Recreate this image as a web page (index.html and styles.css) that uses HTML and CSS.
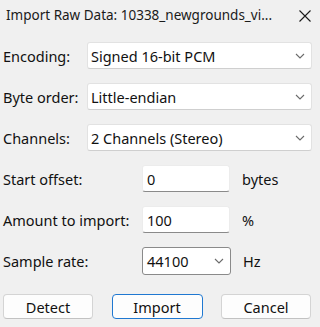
FILE: index.html
```html
<!DOCTYPE html>
<html lang="en">
<head>
    <meta charset="UTF-8">
    <title>Import Raw Data</title>
    <link rel="stylesheet" href="styles.css">
</head>
<body>
    <div class="dialog">
        <div class="titlebar">
            <span class="title">Import Raw Data: 10338_newgrounds_vi...</span>
            <svg class="close" width="12" height="12" viewBox="0 0 12 12"><path d="M0.5 0.5 L11.5 11.5 M11.5 0.5 L0.5 11.5" stroke="#1a1a1a" stroke-width="1.1" fill="none"/></svg>
        </div>

        <div class="form">
            <div class="row">
                <label class="lbl wide">Encoding:</label>
                <div class="combo full"><span>Signed 16-bit PCM</span><svg class="chev" width="10" height="6" viewBox="0 0 10 6"><path d="M1 1 L5 5 L9 1" stroke="#6b6b6b" stroke-width="1.1" fill="none"/></svg></div>
            </div>
            <div class="row">
                <label class="lbl wide">Byte order:</label>
                <div class="combo full"><span>Little-endian</span><svg class="chev" width="10" height="6" viewBox="0 0 10 6"><path d="M1 1 L5 5 L9 1" stroke="#6b6b6b" stroke-width="1.1" fill="none"/></svg></div>
            </div>
            <div class="row">
                <label class="lbl wide">Channels:</label>
                <div class="combo full"><span>2 Channels (Stereo)</span><svg class="chev" width="10" height="6" viewBox="0 0 10 6"><path d="M1 1 L5 5 L9 1" stroke="#6b6b6b" stroke-width="1.1" fill="none"/></svg></div>
            </div>
            <div class="row">
                <label class="lbl narrow">Start offset:</label>
                <div class="field">0</div>
                <span class="unit">bytes</span>
            </div>
            <div class="row">
                <label class="lbl narrow">Amount to import:</label>
                <div class="field">100</div>
                <span class="unit">%</span>
            </div>
            <div class="row">
                <label class="lbl narrow">Sample rate:</label>
                <div class="combo small"><span>44100</span><svg class="chev" width="10" height="6" viewBox="0 0 10 6"><path d="M1 1 L5 5 L9 1" stroke="#6b6b6b" stroke-width="1.1" fill="none"/></svg></div>
                <span class="unit">Hz</span>
            </div>
        </div>

        <div class="buttons">
            <button class="btn">Detect</button>
            <button class="btn primary">Import</button>
            <button class="btn">Cancel</button>
        </div>
    </div>
</body>
</html>
```

FILE: styles.css
```css
body { margin: 0; background: #f0f0f0; font-family: "Noto Sans", "Open Sans", sans-serif; color: #111; }
.dialog { width: 320px; height: 327px; overflow: hidden; }
.titlebar { height: 30px; display: flex; align-items: center; justify-content: space-between; padding: 0 9px 0 6px; font-size: 13.5px; color: #1a1a1a; }
.close { margin-top: 1px; }
.form { padding: 12px 8px 0 3px; display: flex; flex-direction: column; gap: 14px; }
.row { display: flex; align-items: center; height: 27px; font-size: 14.5px; }
.lbl.wide { width: 84px; }
.lbl.narrow { width: 139px; }
.combo { box-sizing: border-box; height: 27px; background: #fff; border: 1px solid #e2e2e2; border-bottom-color: #cfcfcf; border-radius: 3px; display: flex; align-items: center; justify-content: space-between; padding: 0 6px 0 3px; }
.combo.full { width: 225px; }
.combo.small { width: 89px; height: 28px; border-color: #8a8a8a; padding-left: 4px; }
.field { box-sizing: border-box; width: 88px; height: 27px; background: #fff; border: 1px solid #ececec; border-bottom: 1px solid #8a8a8a; border-radius: 3px; padding: 0 4px; display: flex; align-items: center; }
.unit { margin-left: 12px; }
.buttons { display: flex; justify-content: space-between; padding: 20px 9px 0 3px; }
.btn { box-sizing: border-box; width: 90px; height: 25px; background: #fdfdfd; border: 1px solid #d4d4d4; border-bottom-color: #c2c2c2; border-radius: 4px; font-family: inherit; font-size: 14.5px; color: #111; padding: 0; }
.btn.primary { border: 1.5px solid #1f78d1; width: 91px; }
```
